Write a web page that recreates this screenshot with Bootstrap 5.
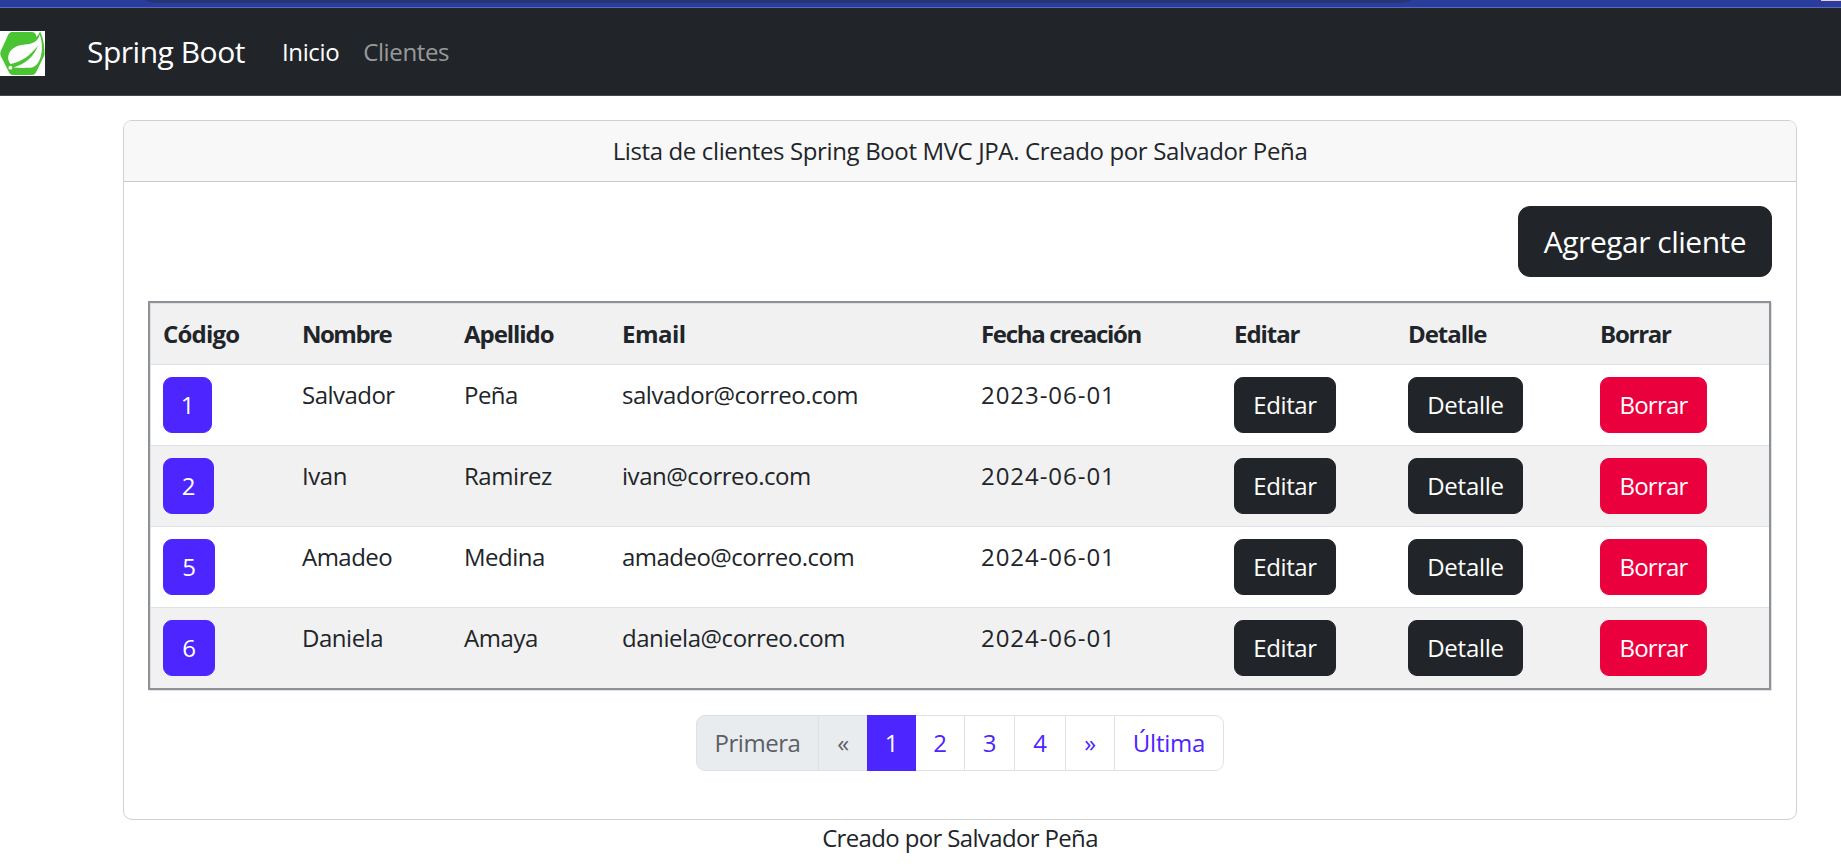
<!DOCTYPE html>
<html lang="es">
<head>
<meta charset="utf-8">
<meta name="viewport" content="width=device-width, initial-scale=1">
<title>Clientes</title>
<link href="https://cdn.jsdelivr.net/npm/bootstrap@5.3.0/dist/css/bootstrap.min.css" rel="stylesheet">
<style>
:root { font-size: 24px; --violet: #4c25ff; --crimson: #eb003e; --ink: #212529; }
body { font-family: "Open Sans", "Noto Sans", sans-serif; font-weight: 380; letter-spacing: -.45px; color: var(--ink); overflow: hidden; }

/* browser edge above the page */
.chrome-edge { height: 8px; background: #2a3c9c; border-bottom: 1px solid #566bbd; overflow: hidden; }
.address-pill { width: 1265px; height: 3px; margin-left: 146px; background: #263674; border-radius: 0 0 12px 12px / 0 0 3px 3px; }
.corner-chip { width: 20px; height: 1px; background: #f3c9d8; }

.topbar { height: 88px; padding: 0; background: var(--ink); border-bottom: 1px solid #44484d; }
.logo { width: 45px; height: 45px; display: block; margin-top: 4px; }
.topbar .navbar-brand { font-size: 30px; margin: 0 0 0 42px; width: 183px; padding: 0; letter-spacing: -.49px; line-height: 45px; }
.topbar .nav-link { padding: 0 12px; line-height: 36px; letter-spacing: -.38px; }

.page { width: 1710px; margin-left: 105px; padding: 0 18px; }
.page .card { margin-top: 24px; border-color: #d0d1d2; border-radius: 9px; }
.page .card-header { padding: 12px 24px; border-color: #c9cacb; background: #f8f8f8; letter-spacing: -.37px; border-radius: 8px 8px 0 0; }
.page .card-body { padding: 24px; }
.btn { letter-spacing: inherit; font-weight: inherit; padding: 9px 18px; border-radius: 9px; white-space: nowrap; }
.btn-add { width: 254px; font-size: 30px; padding: 12px 0; border-radius: 12px; letter-spacing: -.49px; }
.btn-code { --bs-btn-bg: var(--violet); --bs-btn-border-color: var(--violet); --bs-btn-color: #fff; padding: 9px 0; width: 52px; }
.code-1 { width: 49px; } .code-2 { width: 51px; }
.btn-edit { width: 102px; padding: 9px 0; letter-spacing: -.38px; }
.btn-detail { width: 115px; padding: 9px 0; letter-spacing: -.25px; }
.btn-del { --bs-btn-bg: var(--crimson); --bs-btn-border-color: var(--crimson); --bs-btn-color: #fff; width: 107px; padding: 9px 0; letter-spacing: -.78px; }

.client-table { table-layout: fixed; width: 1623px; margin: 24px 0 25px; border-collapse: separate; border-spacing: 0; border: 2px solid #8e9195; box-shadow: 1px 1px 0 #dee2e6; color: var(--ink); }
.client-table > :not(caption) > * > * { padding: 12px; border: 0; border-top: 1px solid #dee2e6; box-shadow: none; background: #fff; white-space: nowrap; }
.client-table > :not(caption) > * > :first-child { border-left: 1px solid #dee2e6; }
.client-table > thead > tr > th, .client-table > tbody > tr:nth-child(even) > td { background: #f1f1f1; }
.client-table th { font-weight: 700; letter-spacing: -1.05px; }
.client-table th:nth-child(1) { letter-spacing: -.78px; }
.client-table th:nth-child(2) { letter-spacing: -1.5px; }
.client-table th:nth-child(4) { letter-spacing: -.5px; }
.client-table th:nth-child(5) { letter-spacing: -1.32px; }
.client-table th:nth-child(8) { letter-spacing: -1.25px; }
.client-table .date { letter-spacing: .95px; }
.client-table .tight { letter-spacing: -.52px; }
.client-table .btn { display: block; }

.pager { --bs-pagination-color: var(--violet); --bs-pagination-active-bg: var(--violet); --bs-pagination-active-border-color: var(--violet); --bs-pagination-disabled-bg: #e9ecef; --bs-pagination-disabled-color: #5c6064; --bs-pagination-border-color: #dee2e6; --bs-pagination-border-radius: 9px; margin: 0 0 24px; }
.pager .page-link { padding: 9px 0; text-align: center; width: 50px; font-size: 24px; }
.pager .w-first { width: 123px; } .pager .w-one { width: 49px; } .pager .w-three { width: 51px; } .pager .w-four { width: 52px; } .pager .w-last { width: 110px; letter-spacing: -.22px; }
.foot { letter-spacing: -.65px; }
</style>
</head>
<body>
<div class="chrome-edge d-flex justify-content-between"><div class="address-pill"></div><div class="corner-chip"></div></div>
<nav class="navbar navbar-dark topbar d-flex flex-nowrap justify-content-start align-items-center">
  <svg class="logo" viewBox="0 0 45 45" aria-hidden="true">
    <path fill="#fff" d="M0 0h45v45H0z"/>
    <path fill="#4bc433" d="M12 1h20q2.500 0 3.700 2.200L44 20q1 2.500 0 5l-8 16.500Q34.500 44 32 44H13q-2.500 0-3.800-2.200L.8 25q-1-2.500 0-5L8.500 3.200Q9.700 1 12 1z"/>
    <path fill="#fff" d="M36 0h9v20l-1-1Q43.500 9 40 0.500Q39 4 36 6z"/>
    <path fill="#4bc433" d="M40 .5Q38.500 5 35 7l4 8 3.500 10L44.500 20Q44 8 40 .5z"/>
    <path fill="#fff" d="M39.700 3.500C38 10 34 12.500 27 13.300C17 14 9 17.500 8.200 26c-.2 3 .8 5.300 2.300 7C21 31 30 25 38 14.500C34 26 25 33 13.500 36.500c6 .5 14 .5 18.500 0C40.500 34.500 45 18 39.700 3.500z"/>
    <circle cx="10.400" cy="36.700" r="1.900" fill="#fff"/>
  </svg>
  <a class="navbar-brand" href="#">Spring Boot</a>
  <ul class="navbar-nav flex-row">
    <li class="nav-item"><a class="nav-link active" href="#">Inicio</a></li>
    <li class="nav-item"><a class="nav-link" href="#">Clientes</a></li>
  </ul>
</nav>
<main class="page">
  <div class="card">
    <div class="card-header text-center">Lista de clientes Spring Boot MVC JPA. Creado por Salvador Peña</div>
    <div class="card-body">
      <div class="d-flex justify-content-end"><a class="btn btn-dark btn-add" href="#">Agregar cliente</a></div>
      <table class="table client-table">
        <colgroup><col style="width:140px"><col style="width:162px"><col style="width:158px"><col style="width:359px"><col style="width:253px"><col style="width:174px"><col style="width:192px"><col></colgroup>
        <thead><tr><th>Código</th><th>Nombre</th><th>Apellido</th><th>Email</th><th>Fecha creación</th><th>Editar</th><th>Detalle</th><th>Borrar</th></tr></thead>
        <tbody>
          <tr><td><a class="btn btn-code code-1" href="#">1</a></td><td class="tight">Salvador</td><td class="tight">Peña</td><td>salvador@correo.com</td><td class="date">2023-06-01</td><td><a class="btn btn-dark btn-edit" href="#">Editar</a></td><td><a class="btn btn-dark btn-detail" href="#">Detalle</a></td><td><a class="btn btn-del" href="#">Borrar</a></td></tr>
          <tr><td><a class="btn btn-code code-2" href="#">2</a></td><td>Ivan</td><td>Ramirez</td><td>ivan@correo.com</td><td class="date">2024-06-01</td><td><a class="btn btn-dark btn-edit" href="#">Editar</a></td><td><a class="btn btn-dark btn-detail" href="#">Detalle</a></td><td><a class="btn btn-del" href="#">Borrar</a></td></tr>
          <tr><td><a class="btn btn-code" href="#">5</a></td><td class="tight">Amadeo</td><td class="tight">Medina</td><td class="tight">amadeo@correo.com</td><td class="date">2024-06-01</td><td><a class="btn btn-dark btn-edit" href="#">Editar</a></td><td><a class="btn btn-dark btn-detail" href="#">Detalle</a></td><td><a class="btn btn-del" href="#">Borrar</a></td></tr>
          <tr><td><a class="btn btn-code" href="#">6</a></td><td>Daniela</td><td>Amaya</td><td>daniela@correo.com</td><td class="date">2024-06-01</td><td><a class="btn btn-dark btn-edit" href="#">Editar</a></td><td><a class="btn btn-dark btn-detail" href="#">Detalle</a></td><td><a class="btn btn-del" href="#">Borrar</a></td></tr>
        </tbody>
      </table>
      <ul class="pagination pager justify-content-center">
        <li class="page-item disabled"><span class="page-link w-first">Primera</span></li>
        <li class="page-item disabled"><span class="page-link">«</span></li>
        <li class="page-item active"><span class="page-link w-one">1</span></li>
        <li class="page-item"><a class="page-link" href="#">2</a></li>
        <li class="page-item"><a class="page-link w-three" href="#">3</a></li>
        <li class="page-item"><a class="page-link w-four" href="#">4</a></li>
        <li class="page-item"><a class="page-link" href="#">»</a></li>
        <li class="page-item"><a class="page-link w-last" href="#">Última</a></li>
      </ul>
    </div>
  </div>
  <footer class="foot text-center">Creado por Salvador Peña</footer>
</main>
<script src="https://cdn.jsdelivr.net/npm/bootstrap@5.3.0/dist/js/bootstrap.bundle.min.js"></script>
</body>
</html>
